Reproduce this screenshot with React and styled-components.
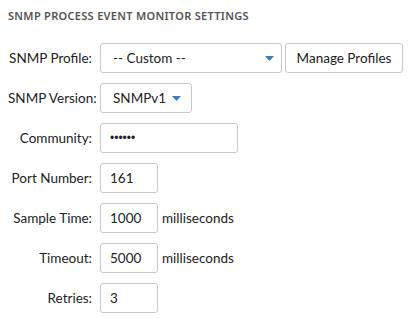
import React from 'react';
import styled, { createGlobalStyle } from 'styled-components';

const GlobalStyle = createGlobalStyle`
  body {
    margin: 0;
    background: #ffffff;
    font-family: "Lato", "Liberation Sans", sans-serif;
    color: #222;
  }
`;

const Page = styled.div`
  padding: 9px 8px 8px 8px;
`;

const Heading = styled.h2`
  margin: 0 0 20px 0;
  font-family: "Noto Sans", "Liberation Sans", sans-serif;
  font-size: 11px;
  line-height: 14px;
  font-weight: 600;
  letter-spacing: 0.3px;
  color: #555;
  text-transform: uppercase;
`;

const Form = styled.div`
  display: grid;
  grid-template-columns: 84px auto;
  column-gap: 8px;
  row-gap: 10px;
  align-items: center;
`;

const Label = styled.label`
  text-align: right;
  font-size: 13.5px;
  color: #222;
  white-space: nowrap;
`;

const Field = styled.div`
  display: flex;
  align-items: center;
  gap: ${p => p.$gap || 4}px;
`;

const Select = styled.div`
  box-sizing: border-box;
  display: flex;
  align-items: center;
  width: ${p => p.$width}px;
  height: 30px;
  padding: 0 ${p => p.$padRight}px 0 12px;
  border: 1px solid #c8c8c8;
  border-radius: 3px;
  background: #fff;
  font-size: 13.5px;
  color: #222;
`;

const Arrow = styled.svg`
  margin-left: auto;
  flex: none;
`;

const Button = styled.button`
  box-sizing: border-box;
  height: 30px;
  width: 118px;
  padding: 0 8px;
  border: 1px solid #c8c8c8;
  border-radius: 3px;
  background: #fff;
  font-family: inherit;
  font-size: 13.5px;
  color: #222;
  white-space: nowrap;
`;

const Input = styled.input`
  box-sizing: border-box;
  width: ${p => p.$width}px;
  height: 30px;
  padding: 0 9px;
  border: 1px solid #c8c8c8;
  border-radius: 3px;
  background: #fff;
  font-family: ${p => (p.$masked ? '"Liberation Sans", sans-serif' : 'inherit')};
  font-size: ${p => (p.$masked ? 12 : 13.5)}px;
  color: #222;
  outline: none;
`;

const Unit = styled.span`
  font-size: 13.5px;
  color: #222;
`;

const Caret = () => (
  <Arrow width="9" height="5" viewBox="0 0 9 5">
    <path d="M0 0 H9 L4.5 5 Z" fill="#3a7dc0" />
  </Arrow>
);

export default function App() {
  return (
    <Page>
      <GlobalStyle />
      <Heading>SNMP Process Event Monitor Settings</Heading>
      <Form>
        <Label>SNMP Profile:</Label>
        <Field $gap={3}>
          <Select $width={182} $padRight={7}>
            -- Custom --
            <Caret />
          </Select>
          <Button>Manage Profiles</Button>
        </Field>

        <Label>SNMP Version:</Label>
        <Field>
          <Select $width={92} $padRight={10}>
            SNMPv1
            <Caret />
          </Select>
        </Field>

        <Label>Community:</Label>
        <Field>
          <Input $width={138} $masked readOnly value={'\u2022\u2022\u2022\u2022\u2022\u2022'} />
        </Field>

        <Label>Port Number:</Label>
        <Field>
          <Input $width={58} readOnly value="161" />
        </Field>

        <Label>Sample Time:</Label>
        <Field>
          <Input $width={58} readOnly value="1000" />
          <Unit>milliseconds</Unit>
        </Field>

        <Label>Timeout:</Label>
        <Field>
          <Input $width={58} readOnly value="5000" />
          <Unit>milliseconds</Unit>
        </Field>

        <Label>Retries:</Label>
        <Field>
          <Input $width={58} readOnly value="3" />
        </Field>
      </Form>
    </Page>
  );
}
